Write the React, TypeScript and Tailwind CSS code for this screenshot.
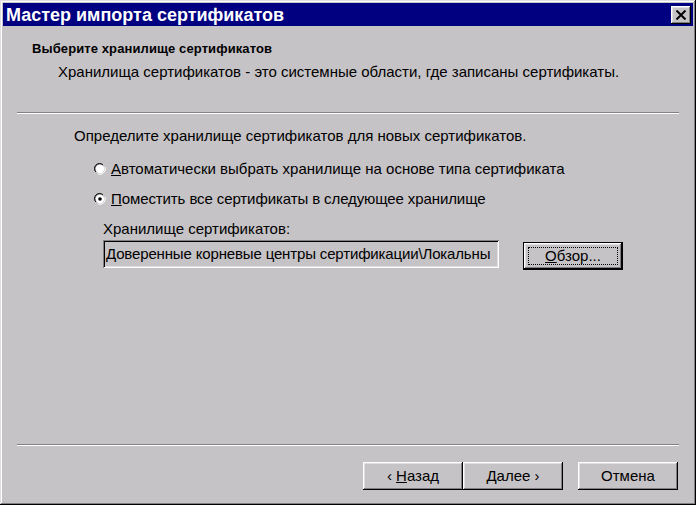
import React from "react";

const raised =
  "shadow-[inset_-1px_-1px_#000,inset_1px_1px_#fff,inset_-2px_-2px_#808080,inset_2px_2px_#dfdfdf]";

function Radio({ checked }: { checked?: boolean }) {
  return (
    <svg width="12" height="12" viewBox="0 0 12 12" className="shrink-0">
      <path d="M1 8 A5.5 5.5 0 0 1 8 1" stroke="#808080" strokeWidth="1" fill="none" />
      <path d="M2 9 A4.5 4.5 0 0 1 9 2" stroke="#000" strokeWidth="1" fill="none" />
      <circle cx="6" cy="6" r="4.2" fill="#fff" />
      <path d="M4 11 A5.5 5.5 0 0 0 11 4" stroke="#fff" strokeWidth="1" fill="none" />
      {checked && <circle cx="6" cy="6" r="1.8" fill="#000" />}
    </svg>
  );
}

function Separator() {
  return (
    <div className="mx-[14px] w-[662px]">
      <div className="h-px bg-[#848284]" />
      <div className="h-px bg-white" />
    </div>
  );
}

function Button({ children, className = "" }: { children: React.ReactNode; className?: string }) {
  return (
    <div
      className={`flex h-[28px] w-[100px] items-center justify-center bg-[#c6c3c6] text-black ${raised} ${className}`}
    >
      {children}
    </div>
  );
}

export default function App() {
  return (
    <div
      className="flex h-[505px] w-[696px] flex-col bg-[#c6c3c6] p-[3px] text-[15px] text-black shadow-[inset_-1px_-1px_#000,inset_1px_1px_#dfdfdf,inset_-2px_-2px_#808080,inset_2px_2px_#fff]"
      style={{ fontFamily: '"Liberation Sans", Arial, sans-serif' }}
    >
      {/* title bar */}
      <div className="flex h-[23px] items-center justify-between bg-[#000080] pl-[3px] pr-[2px]">
        <span className="text-[18px] font-bold leading-none text-white">Мастер импорта сертификатов</span>
        <div className={`flex h-[18px] w-[20px] items-center justify-center bg-[#c6c3c6] ${raised}`}>
          <svg width="12" height="10" viewBox="0 0 12 10">
            <path d="M1.5 0.5 L10.5 9.5 M10.5 0.5 L1.5 9.5" stroke="#000" strokeWidth="2" />
          </svg>
        </div>
      </div>

      {/* header */}
      <div className="mt-[13px] h-[20px] pl-[29px] text-[13px] font-bold leading-[20px] tracking-[0.1px]">
        Выберите хранилище сертификатов
      </div>
      <div className="mt-[3px] h-[20px] pl-[55px] leading-[20px]">
        Хранилища сертификатов - это системные области, где записаны сертификаты.
      </div>
      <div className="mt-[30px]">
        <Separator />
      </div>

      {/* body */}
      <div className="mt-[12px] h-[20px] pl-[71px] leading-[20px]">
        Определите хранилище сертификатов для новых сертификатов.
      </div>
      <div className="mt-[13px] flex h-[20px] items-center gap-[5px] pl-[91px] leading-[20px]">
        <Radio />
        <span>
          <span className="underline">А</span>втоматически выбрать хранилище на основе типа сертификата
        </span>
      </div>
      <div className="mt-[10px] flex h-[20px] items-center gap-[5px] pl-[91px] leading-[20px]">
        <Radio checked />
        <span className="tracking-[-0.1px]">
          <span className="underline">П</span>оместить все сертификаты в следующее хранилище
        </span>
      </div>
      <div className="mt-[10px] h-[20px] pl-[100px] leading-[20px]">Хранилище сертификатов:</div>
      <div className="mt-px flex items-start pl-[100px]">
        <div className="flex h-[28px] w-[396px] items-center overflow-hidden whitespace-nowrap bg-[#c6c3c6] pl-[3px] tracking-[-0.15px] shadow-[inset_1px_1px_#808080,inset_-1px_-1px_#fff,inset_2px_2px_#000,inset_-2px_-2px_#dfdfdf]">
          Доверенные корневые центры сертификации\Локальны
        </div>
        <div className="ml-[24px] mt-[2px] border border-black">
          <div className={`relative flex h-[26px] w-[98px] items-center justify-center ${raised}`}>
            <div className="absolute inset-[4px] border border-dotted border-black" />
            <span>
              <span className="underline">О</span>бзор...
            </span>
          </div>
        </div>
      </div>

      {/* footer */}
      <div className="mt-auto">
        <Separator />
        <div className="mt-[16px] flex justify-end pr-[15px] pb-[12px]">
          <Button>
            ‹&nbsp;<span className="underline">Н</span>азад
          </Button>
          <Button>Далее&nbsp;›</Button>
          <Button className="ml-[15px]">Отмена</Button>
        </div>
      </div>
    </div>
  );
}
